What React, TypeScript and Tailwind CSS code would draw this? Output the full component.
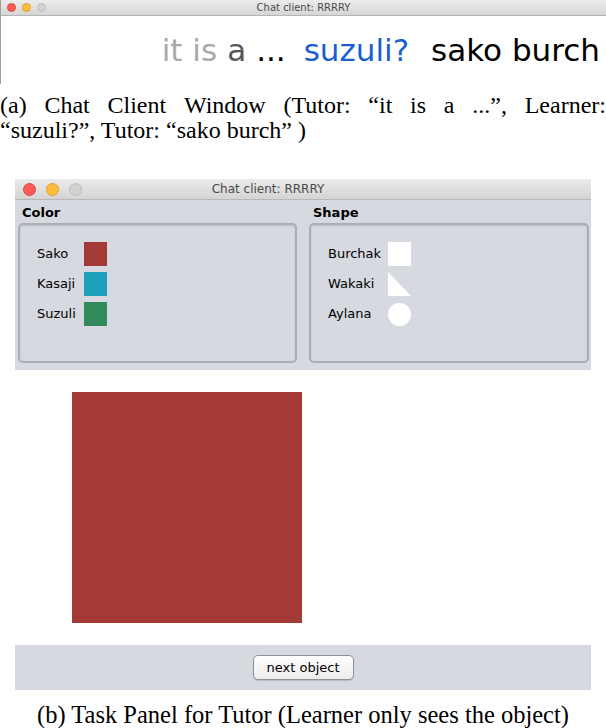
const ui = "font-['DejaVu_Sans',sans-serif]";
const serif = "font-['Liberation_Serif','Times_New_Roman',serif]";

type Item = { name: string; shape: React.ReactNode };

function Lights({ size }: { size: "sm" | "lg" }) {
	const dot = size === "sm" ? "h-[9px] w-[9px]" : "h-[13px] w-[13px]";
	const gap = size === "sm" ? "gap-[6px]" : "gap-[10px]";
	return (
		<div className={`flex items-center ${gap}`}>
			<span className={`${dot} rounded-full bg-[#fc5b57] border border-[#e0443e]`} />
			<span className={`${dot} rounded-full bg-[#fdbc40] border border-[#dea123]`} />
			<span className={`${dot} rounded-full bg-[#d2d2d2] border border-[#bdbdbd]`} />
		</div>
	);
}

function GroupBox({ label, items, labelWidth }: { label: string; items: Item[]; labelWidth: string }) {
	return (
		<div className="flex flex-col">
			<div className={`${ui} h-[22px] pl-[4px] pt-[4px] text-[13px] font-bold leading-[15px] text-black`}>
				{label}
			</div>
			<div className="h-[140px] rounded-[5px] border-2 border-[#abadb2] bg-[#d6d9df] pl-[17px] pt-[17px] shadow-[inset_0_1px_2px_rgba(0,0,0,0.12)]">
				<div className="flex flex-col gap-[6px]">
					{items.map((item) => (
						<div key={item.name} className="flex h-[24px] items-center">
							<span className={`${ui} ${labelWidth} text-[13px] text-black`}>{item.name}</span>
							{item.shape}
						</div>
					))}
				</div>
			</div>
		</div>
	);
}

export default function App() {
	const colors: Item[] = [
		{ name: "Sako", shape: <span className="h-[24px] w-[23px] bg-[#a33a36]" /> },
		{ name: "Kasaji", shape: <span className="h-[24px] w-[23px] bg-[#1aa0ba]" /> },
		{ name: "Suzuli", shape: <span className="h-[24px] w-[23px] bg-[#338a5a]" /> },
	];
	const shapes: Item[] = [
		{ name: "Burchak", shape: <span className="h-[24px] w-[23px] bg-white" /> },
		{
			name: "Wakaki",
			shape: (
				<svg width="23" height="24" viewBox="0 0 23 24">
					<polygon points="0,0 0,24 23,24" fill="#fff" />
				</svg>
			),
		},
		{ name: "Aylana", shape: <span className="h-[23px] w-[23px] rounded-full bg-white" /> },
	];
	const line1 = ["(a)", "Chat", "Client", "Window", "(Tutor:", "\u201cit", "is", "a", "...\u201d,", "Learner:"];

	return (
		<div className="h-[728px] w-[606px] overflow-hidden bg-white">
			{/* chat client window */}
			<div className="h-[84px] border-l border-[#a0a0a0]">
				<div className="relative flex h-[16px] items-center justify-center border-b border-[#b5b5b5] bg-gradient-to-b from-[#ececec] to-[#d6d6d6]">
					<div className="absolute left-[6px] top-[3px]">
						<Lights size="sm" />
					</div>
					<span className={`${ui} text-[10px] leading-none text-[#4a4a4a]`}>Chat client: RRRRY</span>
				</div>
				<div className={`${ui} flex h-[68px] items-center justify-end pr-[6px] text-[31px] leading-none`}>
					<span className="text-[#a9a9a9]">it is</span>
					<span className="ml-[10px] text-[#555]">a</span>
					<span className="ml-[10px] text-black">...</span>
					<span className="ml-[18px] text-[#1a5fd0]">suzuli?</span>
					<span className="ml-[22px] text-black">sako burch</span>
				</div>
			</div>

			{/* caption a */}
			<div className={`${serif} mt-[9px] text-[24px] leading-[25px] text-black`}>
				<div className="flex justify-between">
					{line1.map((w, i) => (
						<span key={i}>{w}</span>
					))}
				</div>
				<div>{"\u201csuzuli?\u201d, Tutor: \u201csako burch\u201d )"}</div>
			</div>

			{/* task panel window */}
			<div className="mx-[15px] mt-[36px]">
				<div className="relative flex h-[21px] items-center justify-center border-b border-[#b8b8b8] bg-gradient-to-b from-[#ebebeb] to-[#d4d4d4] pr-[70px]">
					<div className="absolute left-[8px] top-[4px]">
						<Lights size="lg" />
					</div>
					<span className={`${ui} text-[12px] leading-none text-[#4a4a4a]`}>Chat client: RRRRY</span>
				</div>
				<div className="grid h-[170px] grid-cols-[279px_280px] gap-[12px] bg-[#d6d9df] pl-[3px] pt-[1px]">
					<GroupBox label="Color" items={colors} labelWidth="w-[47px]" />
					<GroupBox label="Shape" items={shapes} labelWidth="w-[60px]" />
				</div>
				<div className="h-[275px] pl-[57px] pt-[22px]">
					<div className="h-[231px] w-[230px] bg-[#a33a36]" />
				</div>
				<div className="flex h-[45px] items-center justify-center bg-[#d6d9df]">
					<button
						type="button"
						className={`${ui} h-[25px] w-[101px] rounded-[5px] border border-[#8f8f8f] bg-gradient-to-b from-white to-[#ececec] text-[13px] text-black shadow-[0_1px_1px_rgba(0,0,0,0.15)]`}
					>
						next object
					</button>
				</div>
			</div>

			{/* caption b */}
			<div className={`${serif} mt-[12px] text-center text-[24.5px] leading-[25px] text-black`}>
				(b) Task Panel for Tutor (Learner only sees the object)
			</div>
		</div>
	);
}
